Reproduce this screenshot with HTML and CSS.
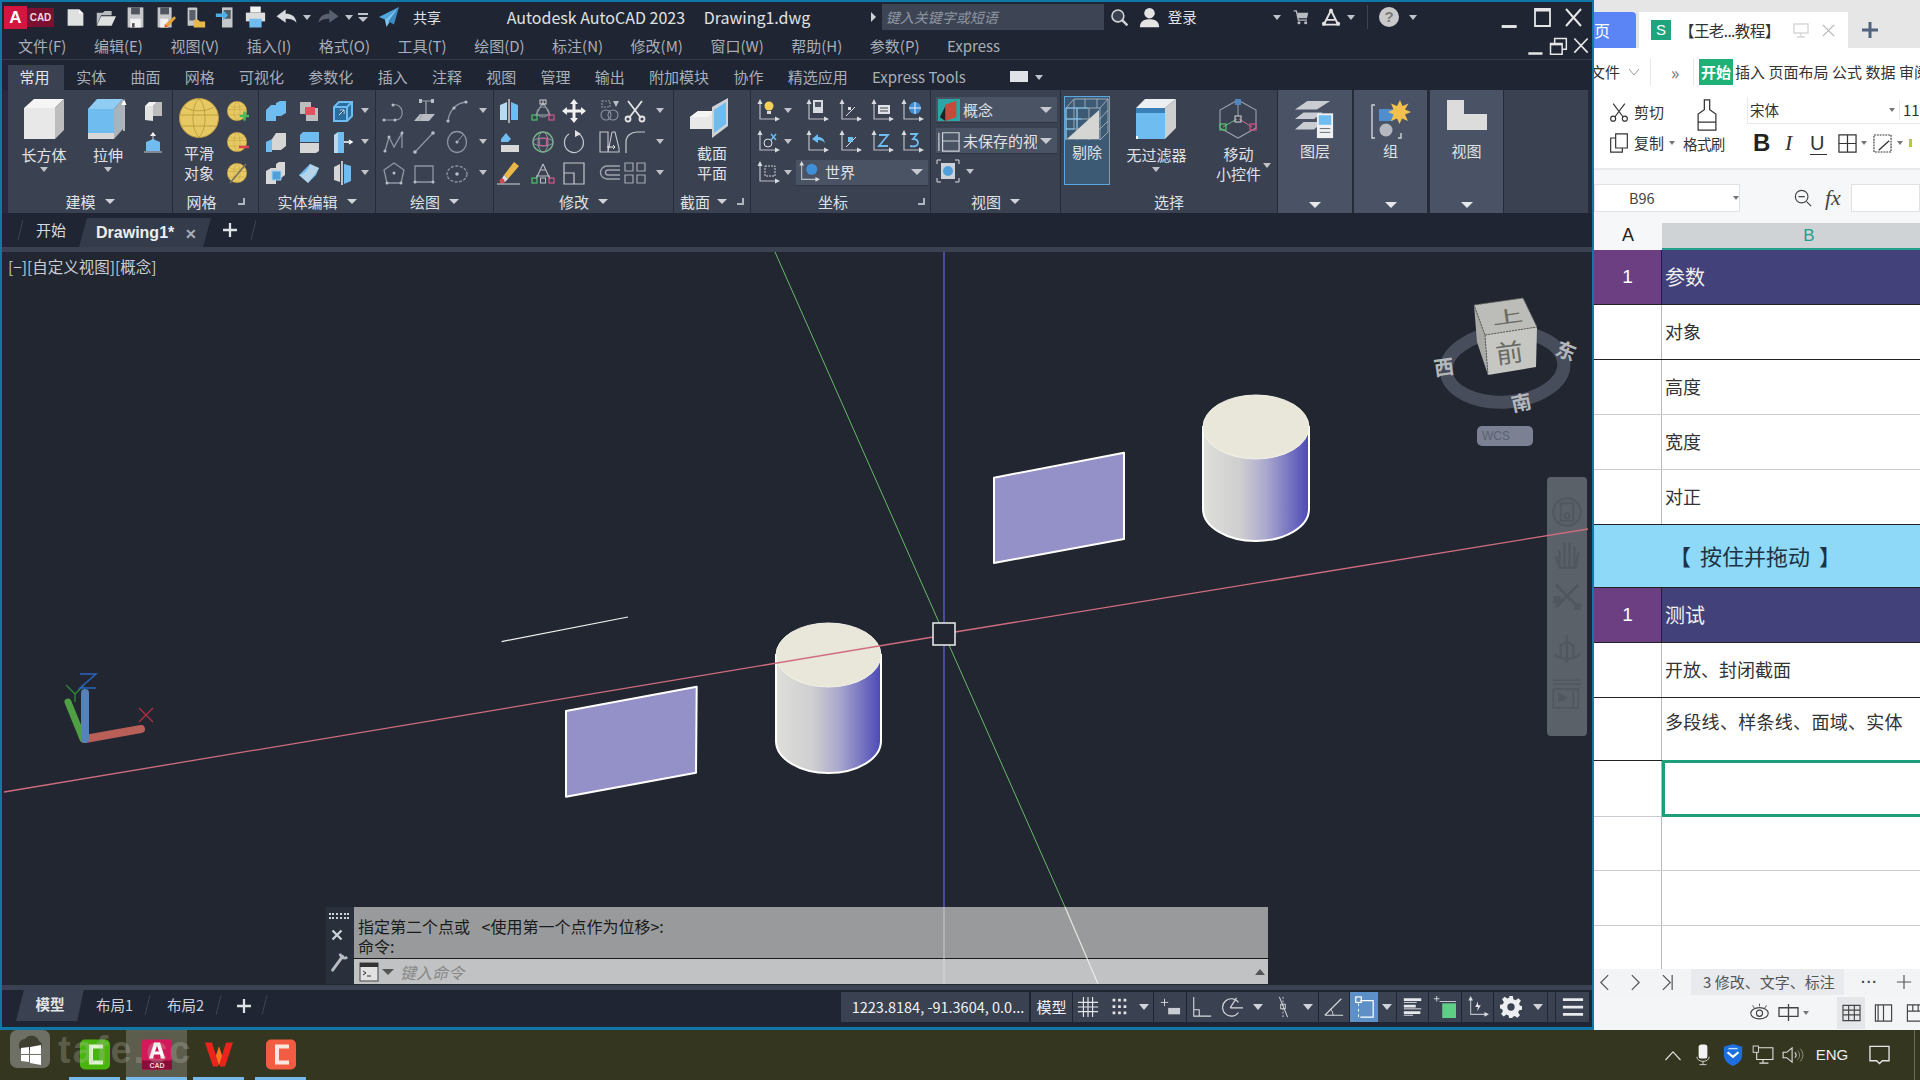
FILE: index.html
```html
<!DOCTYPE html>
<html lang="zh-CN">
<head>
<meta charset="utf-8">
<title>Autodesk AutoCAD 2023</title>
<link rel="stylesheet" href="styles.css">
</head>
<body>
<svg class="sprite" aria-hidden="true">
<defs>
<linearGradient id="cyl" x1="0" x2="1" y1="0" y2="0"><stop offset="0" stop-color="#dededa"/><stop offset=".35" stop-color="#cfcfd0"/><stop offset=".6" stop-color="#a9a7cd"/><stop offset=".85" stop-color="#6f6dbf"/><stop offset="1" stop-color="#4c49b6"/></linearGradient>
<symbol id="cube" viewBox="0 0 40 40"><path fill="#e8e8e8" d="M0 9h31v31H0z"/><path fill="#f5f5f5" d="M0 9 10 0h30l-9 9z"/><path fill="#bdbdbd" d="M31 9l9-9v31l-9 9z"/></symbol>
<symbol id="extrude" viewBox="0 0 40 40"><path fill="#6ebcf0" d="M0 10h26v24H0z"/><path fill="#d8d8d8" d="M0 34h26v6H0z"/><path fill="#90cdf5" d="M0 10 9 0h26l-9 10z"/><path fill="#aab2ba" d="M26 10l9-10v30l-9 10z"/><path stroke="#e8e8e8" stroke-width="1.4" d="M36 32V3"/><path fill="#fff" d="M36 0l-2.5 6h5z"/></symbol>
<symbol id="polys" viewBox="0 0 24 24"><path fill="#e2e2e2" d="M4 7h8v15l-8-1z"/><path fill="#bcbcbc" d="M12 7l4-4h5v14h-9z"/><path fill="#f2f2f2" d="M4 7l4-4h8l-4 4z"/></symbol>
<symbol id="press" viewBox="0 0 24 24"><path fill="#6ebcf0" d="M5 12l7-3 7 3v9H5z"/><path fill="#fff" d="M12 2l-3 4h6z"/><path stroke="#cbd0d6" d="M3 22h18M12 5v5"/></symbol>
<symbol id="sph" viewBox="0 0 40 40"><ellipse cx="20" cy="20" rx="19.5" ry="19.5" fill="#e7c964" stroke="#b9983f"/><path fill="none" stroke="#b79437" stroke-width=".8" d="M1 17h38M3 28h34M20 1c-7 4-9 30 0 38M20 1c7 4 9 30 0 38M5 9c8 5 22 5 30 0"/></symbol>
<symbol id="sphp" viewBox="0 0 24 24"><use href="#sph" x="1" y="0" width="20" height="24"/><path stroke="#3fbf5a" stroke-width="2.6" d="M14 17h9M18.500 12.500v9"/></symbol>
<symbol id="sphm" viewBox="0 0 24 24"><use href="#sph" x="1" y="0" width="20" height="24"/><path stroke="#d8454a" stroke-width="2.6" d="M13 17h10"/></symbol>
<symbol id="sphs" viewBox="0 0 24 24"><use href="#sph" x="1" y="0" width="20" height="24"/><path stroke="#75705f" stroke-width="1.6" d="M4 22 20 3"/></symbol>
<symbol id="e1" viewBox="0 0 24 24"><path fill="#6ebcf0" d="M2 11l5-5h5v-2l4-2h6v12l-5 3h-5v5H2z"/></symbol>
<symbol id="e2" viewBox="0 0 24 24"><path fill="#bdbdbd" d="M3 3h11v6h7v13H9v-7H3z"/><path fill="#e2525f" d="M8 8h10v8H8z"/></symbol>
<symbol id="e3" viewBox="0 0 24 24"><path fill="#2b6d9e" stroke="#6ebcf0" stroke-width="2" d="M3 8l5-5h13v14l-5 5H3zM3 8h13v14M16 8l5-5"/><path stroke="#cfe8fa" d="M8 16l5-5M9 11h4v4"/></symbol>
<symbol id="e4" viewBox="0 0 24 24"><path fill="#6ebcf0" d="M2 12l6-3v13H2z"/><path fill="#d6d6d6" d="M8 9l4-6h10v13l-5 4H8z"/></symbol>
<symbol id="e5" viewBox="0 0 24 24"><path fill="#6ebcf0" d="M3 5l3-3h16v10H3z"/><path fill="#d6d6d6" d="M3 13h19v8l-3 2H3z"/></symbol>
<symbol id="e6" viewBox="0 0 24 24"><path fill="#b8d9f0" d="M3 5l4-3v21H3z"/><path fill="#6ebcf0" d="M7 2h6v21H7z"/><path stroke="#fff" stroke-width="1.5" d="M13 12h8m-3-2 3 2-3 2"/></symbol>
<symbol id="e7" viewBox="0 0 24 24"><path fill="#d8d8d8" d="M2 10l5-3h5V3l3-2h6v13l-4 3h-5v6H2z"/><path fill="#4f9fd8" stroke="#9ed2f5" d="M8 10h9v9H8z"/></symbol>
<symbol id="e8" viewBox="0 0 24 24"><path fill="#6ebcf0" d="M2 14 13 3l9 4-3 7-8 8z"/><path fill="#e4e4e4" d="M2 14c6 0 10-7 11-11l9 4c-3 5-7 10-11 15z" opacity=".6"/></symbol>
<symbol id="e9" viewBox="0 0 24 24"><path fill="#d6d6d6" d="M3 6l6-3v18l-6-2z"/><path fill="#6ebcf0" d="M13 3l7 2v15l-7 3z"/><path stroke="#eee" stroke-width="1.5" d="M11 0v24"/></symbol>
<symbol id="d1" viewBox="0 0 24 24"><g fill="none" stroke="#8f96a2" stroke-width="1.2"><path d="M2 21h11c6 0 8-5 7-9-1-5-5-7-9-6"/></g><g fill="#b9bec6"><circle cx="2" cy="21" r="1.500"/><circle cx="13" cy="21" r="1.500"/><circle cx="11" cy="6" r="1.500"/></g></symbol>
<symbol id="d2" viewBox="0 0 24 24"><path fill="#b9bcc2" d="M2 22l6-7h15l-6 7z"/><path fill="none" stroke="#a0a5ad" stroke-width="1.200" d="M8 2h12M14 2v13M10 15l-3 7"/><path fill="#b9bec6" d="M7 0h3v4H7zM19 0h3v4h-3z"/></symbol>
<symbol id="d3" viewBox="0 0 24 24"><path fill="none" stroke="#8f96a2" stroke-width="1.3" d="M3 22C4 12 11 4 21 3"/><g fill="#b9bec6"><circle cx="3" cy="22" r="1.600"/><circle cx="9" cy="9" r="1.600"/><circle cx="21" cy="3" r="1.600"/></g></symbol>
<symbol id="d4" viewBox="0 0 24 24"><path fill="none" stroke="#8f96a2" stroke-width="1.3" d="M3 21 7 7l5 10 8-14v15"/><g fill="#b9bec6"><circle cx="3" cy="21" r="1.500"/><circle cx="7" cy="7" r="1.500"/><circle cx="20" cy="3" r="1.500"/></g></symbol>
<symbol id="d5" viewBox="0 0 24 24"><path stroke="#8f96a2" stroke-width="1.3" d="M3 22 21 3"/><g fill="#b9bec6"><circle cx="3" cy="22" r="1.800"/><circle cx="21" cy="3" r="1.800"/></g></symbol>
<symbol id="d6" viewBox="0 0 24 24"><ellipse cx="12" cy="12" rx="9.500" ry="10.500" fill="none" stroke="#8f96a2" stroke-width="1.300"/><circle cx="12" cy="12" r="1.500" fill="#b9bec6"/><path stroke="#8f96a2" d="M12 12l6-7"/></symbol>
<symbol id="d7" viewBox="0 0 24 24"><path fill="none" stroke="#8f96a2" stroke-width="1.300" d="M12 2l10 7-3 13H5L2 9z"/><circle cx="12" cy="12" r="1.500" fill="#b9bec6"/><g fill="#b9bec6"><circle cx="5" cy="22" r="1.500"/><circle cx="19" cy="22" r="1.500"/></g></symbol>
<symbol id="d8" viewBox="0 0 24 24"><path fill="none" stroke="#8f96a2" stroke-width="1.300" d="M3 5h18v16H3z"/><g fill="#b9bec6"><circle cx="3" cy="21" r="1.500"/><circle cx="21" cy="21" r="1.500"/></g></symbol>
<symbol id="d9" viewBox="0 0 24 24"><ellipse cx="12" cy="13" rx="10" ry="8" fill="none" stroke="#8f96a2" stroke-width="1.300" stroke-dasharray="3 1.500"/><circle cx="12" cy="13" r="1.800" fill="#b9bec6"/></symbol>
<symbol id="m1" viewBox="0 0 24 24"><path fill="#b8d9f0" d="M3 6l7-3v18H3z"/><path fill="#6ebcf0" d="M14 3l7 3v15h-7z"/><path stroke="#e8e8e8" stroke-width="1.300" d="M12 0v24"/></symbol>
<symbol id="m2" viewBox="0 0 24 24"><path fill="none" stroke="#a4a9b1" stroke-width="1.100" d="M12 3l7 13H5zM12 1v6"/><ellipse cx="12" cy="13" rx="6" ry="5" fill="none" stroke="#8f96a2"/><rect x="9" y="1" width="6" height="4" fill="none" stroke="#d0d0d0"/><rect x="1" y="16" width="5" height="5" fill="none" stroke="#4fc06b" stroke-width="1.200"/><rect x="18" y="16" width="5" height="5" fill="none" stroke="#e0508a" stroke-width="1.200"/></symbol>
<symbol id="m3" viewBox="0 0 24 24"><path fill="#f0f0f0" d="M12 0l4 5h-2.500v5.500H19V8l5 4-5 4v-2.500h-5.500V19H16l-4 5-4-5h2.500v-5.500H5V16l-5-4 5-4v2.500h5.500V5H8z"/></symbol>
<symbol id="m4" viewBox="0 0 24 24"><g fill="none" stroke="#8f96a2" stroke-width="1.100"><circle cx="8" cy="16" r="5"/><circle cx="15" cy="16" r="5"/><path d="M4 2h8v6H4z" stroke-dasharray="2 1"/></g><path fill="#b9bec6" d="M15 2h6l-3 6z"/></symbol>
<symbol id="m5" viewBox="0 0 24 24"><g fill="none" stroke="#e4e4e4" stroke-width="1.800"><path d="M5 2l13 17M19 2 6 19"/><circle cx="5" cy="20" r="2.500"/><circle cx="19" cy="20" r="2.500"/></g></symbol>
<symbol id="m6" viewBox="0 0 24 24"><path fill="#6ebcf0" d="M4 20V9l5-6 5 6-3 3H4z"/><path fill="#d8d8d8" d="M4 15h18v7H4z"/></symbol>
<symbol id="m7" viewBox="0 0 24 24"><circle cx="12" cy="12" r="10" fill="none" stroke="#79b58a" stroke-width="1.400"/><ellipse cx="12" cy="12" rx="5" ry="10" fill="none" stroke="#8fa098"/><ellipse cx="12" cy="12" rx="10" ry="4" fill="none" stroke="#8a96aa"/><rect x="8.500" y="8.500" width="7" height="7" fill="none" stroke="#c0608a" stroke-width="1.200"/></symbol>
<symbol id="m8" viewBox="0 0 24 24"><path fill="none" stroke="#c4c8ce" stroke-width="1.200" d="M16 3.500A9.500 10 0 1 1 7 4"/><path fill="#e0e0e0" d="M13 0l6 4-6 3z"/></symbol>
<symbol id="m9" viewBox="0 0 24 24"><path fill="none" stroke="#c4c8ce" stroke-width="1.100" d="M2 2h8v20H2zM14 2l-4 20M14 2h3l4 16v4H10"/><path stroke="#eee" d="M9 17h8m-2-2 2 2-2 2"/></symbol>
<symbol id="m10" viewBox="0 0 24 24"><path fill="none" stroke="#c4c8ce" stroke-width="1.200" d="M3 23V12C3 6 8 2 14 2h8"/></symbol>
<symbol id="m11" viewBox="0 0 24 24"><path fill="#e8b84a" d="M17 1l5 4-11 13-4-4z"/><path fill="#e0e0e0" d="M7 14l4 4-3 3H3z"/><circle cx="5" cy="20" r="2.500" fill="#d8454a"/><path stroke="#d4d7dc" d="M0 23h23"/></symbol>
<symbol id="m12" viewBox="0 0 24 24"><path fill="none" stroke="#b9bec6" stroke-width="1.100" d="M12 3l-7 15M12 3l7 15M5 15h14M9 9h6"/><rect x="1" y="17" width="5" height="5" fill="none" stroke="#4fc06b" stroke-width="1.200"/><rect x="18" y="17" width="5" height="5" fill="none" stroke="#e0508a" stroke-width="1.200"/><rect x="9.500" y="17" width="5" height="5" fill="none" stroke="#b9bec6"/></symbol>
<symbol id="m13" viewBox="0 0 24 24"><path fill="none" stroke="#c4c8ce" stroke-width="1.200" d="M2 2h20v21H2zM2 12h10v11"/></symbol>
<symbol id="m14" viewBox="0 0 24 24"><path fill="none" stroke="#9ea3ab" stroke-width="1.400" d="M22 5H9a6 6 0 0 0 0 13h13M22 9H10a2.500 2.500 0 0 0 0 5h12"/></symbol>
<symbol id="m15" viewBox="0 0 24 24"><path fill="none" stroke="#a4a9b1" stroke-width="1.200" d="M2 2h8v8H2zM14 2h8v8h-8zM2 14h8v8H2zM14 14h8v8h-8z"/></symbol>
<symbol id="ucs" viewBox="0 0 24 24"><path fill="none" stroke="#b9bec6" stroke-width="1.200" d="M4 3v17h16"/><path fill="#d8dbe0" d="M4 0 1.500 5h5zM24 20l-5-2.500v5z"/></symbol>
<symbol id="sect" viewBox="0 0 44 40"><path fill="#e8e8e8" d="M0 19l8-6h22v18H0z"/><path fill="#f5f5f5" d="M0 19l8-6h16l-6 6z"/><path fill="#cfd3d6" d="M22 9 38 0v28L22 40z"/><path fill="#6ebcf0" d="M24 12l12-8v22l-12 9z"/></symbol>
<symbol id="cull" viewBox="0 0 44 42"><path fill="none" stroke="#a9b2bb" stroke-width=".9" d="M1 10l8-9h34v33l-8 8H1zM1 10h34v32M35 10l8-9M1 21h34M1 31h34M12 10v32M24 10v32M9 1v30M20 1v9M32 1v9M43 12l-8 9M43 23l-8 8"/><path fill="#d5d5d3" d="M2 41 34 12v29z"/><path fill="none" stroke="#76c6f5" stroke-width=".9" d="M1 41V10h22M1 21h16M1 31h8M12 10v20"/></symbol>
<symbol id="nofilt" viewBox="0 0 40 40"><path fill="#6ebcf0" d="M0 14h29v26H0z"/><path fill="#3a7fb5" d="M0 9h29v5H0z"/><path fill="#eceff2" d="M0 9 9 0h31l-11 9z"/><path fill="#cfcfcf" d="M29 9l11-9v29l-11 11z"/><rect x="-1" y="37" width="3" height="3" fill="#fff"/></symbol>
<symbol id="gizmo" viewBox="0 0 40 40"><path fill="none" stroke="#9aa1ab" stroke-width="1.100" d="M20 1 38 11v18L20 39 2 29V11z"/><path stroke="#9aa1ab" d="M20 3v14"/><path fill="none" stroke="#6db07b" d="M5 28l14-8"/><path fill="none" stroke="#cf6b8f" d="M21 20l13 8"/><rect x="17" y="0" width="6" height="6" fill="#4f86bf"/><rect x="17" y="17" width="6" height="6" fill="none" stroke="#d8d8d8"/><rect x="2" y="25" width="6" height="6" fill="none" stroke="#4fc06b" stroke-width="1.300"/><rect x="32" y="25" width="6" height="6" fill="none" stroke="#d84d86" stroke-width="1.300"/></symbol>
<symbol id="layers" viewBox="0 0 42 40"><path fill="#c9cdd2" d="M0 9 13 0h24L23 9zM0 19l9-7h20l-9 7zM0 30l9-8h20l-9 8z"/><rect x="23" y="13" width="17" height="26" fill="#eef0f2"/><rect x="25" y="15" width="13" height="10" fill="#6ebcf0"/><path stroke="#666" d="M26 29h11M26 33h11"/></symbol>
<symbol id="group" viewBox="0 0 40 40"><path fill="none" stroke="#d0d3d8" stroke-width="1.400" d="M4 5H1v33h3M28 5h-1m0 33h3v-5"/><rect x="8" y="9" width="14" height="12" fill="#4f8fd0"/><circle cx="15" cy="30" r="6.500" fill="#b5b9bf"/><path fill="#f2c04e" d="M29 0l2.500 6 6-2.500L34 9.500l6 2.500-6 2.500L37 21l-6-2.500L28.500 24 26 18.500 20 21l2.500-6.500L17 12l5.500-2.500L20 3.500l6 2.500z"/></symbol>
<symbol id="lview" viewBox="0 0 40 30"><path fill="#dcdcdc" d="M0 0h17v14h23v16H0z"/></symbol>
<symbol id="grid" viewBox="0 0 24 24"><path stroke="#e2e4e8" stroke-width="1.300" d="M7 1v22M12 1v22M17 1v22M1 7h22M1 12h22M1 17h22"/></symbol>
<symbol id="dots" viewBox="0 0 24 24"><path fill="#e2e4e8" d="M5 3h3v3H5zM11 3h3v3h-3zM17 3h3v3h-3zM5 10h3v3H5zM11 10h3v3h-3zM17 10h3v3h-3zM5 17h3v3H5zM11 17h3v3h-3zM17 17h3v3h-3z"/></symbol>
<symbol id="inf" viewBox="0 0 24 24"><path stroke="#d7dade" d="M6 3v8M2 7h8"/><rect x="10" y="13" width="13" height="7" fill="#c9ccd2"/></symbol>
<symbol id="ortho" viewBox="0 0 24 24"><path fill="none" stroke="#d7dade" stroke-width="1.200" d="M3 1v21h19M3 15h6v7"/></symbol>
<symbol id="polar" viewBox="0 0 24 24"><path fill="none" stroke="#d7dade" stroke-width="1.200" d="M19 7A9.500 9.500 0 1 0 19 18M10 13h14M10 13l7-11"/></symbol>
<symbol id="osnap" viewBox="0 0 24 24"><path stroke="#d7dade" stroke-width="1.100" d="M8 1l9 22"/><rect x="9.500" y="9" width="5" height="5" fill="none" stroke="#d7dade"/><path stroke="#d7dade" stroke-dasharray="2 2" d="M12 1v22"/></symbol>
<symbol id="angle" viewBox="0 0 24 24"><path fill="none" stroke="#d7dade" stroke-width="1.200" d="M2 21h20M2 21 20 3"/><path fill="none" stroke="#d7dade" d="M11 21a9 9 0 0 0-3-7"/></symbol>
<symbol id="dyn" viewBox="0 0 24 24"><path fill="none" stroke="#fff" stroke-width="1.300" d="M8 5h14v18H8"/><rect x="3" y="1" width="6" height="6" fill="none" stroke="#fff" stroke-width="1.300"/><path stroke="#fff" stroke-dasharray="3 3" d="M6 8v16"/></symbol>
<symbol id="lines" viewBox="0 0 24 24"><path stroke="#e6e8ec" stroke-width="3" d="M2 4h19M2 11h13M2 18h18"/><path stroke="#e6e8ec" stroke-width="1" d="M2 7h14M2 14h19M2 21h10"/></symbol>
<symbol id="green" viewBox="0 0 24 24"><path stroke="#d7dade" d="M3 0v6M0 3h6"/><path fill="none" stroke="#cfd3d9" d="M6 6h18"/><rect x="9" y="8" width="15" height="16" fill="#5fcf86"/></symbol>
<symbol id="gear" viewBox="0 0 24 24"><path fill="#eceef1" d="M10 0h4l.6 3.500 2.400 1 3-2 2.800 2.800-2 3 1 2.400L24 11v4l-3.200.6-1 2.400 2 3-2.800 2.800-3-2-2.400 1L14 24.500h-4l-.6-3.200-2.400-1-3 2L1.200 19.500l2-3-1-2.400L0 13.500v-4l3.200-.6 1-2.400-2-3L5 .7l3 2 2.400-1zM12 8a4 4 0 1 0 0 8 4 4 0 0 0 0-8z"/></symbol>
<symbol id="menu3" viewBox="0 0 24 24"><path stroke="#e8eaee" stroke-width="3" d="M1 4h22M1 12h22M1 20h22"/></symbol>
</defs>
</svg>

<div class="screen">
<main class="desk">
<section class="acad">
  <header class="titlebar">
    <div class="logo"><b class="logo-a">A</b><b class="logo-cad">CAD</b></div>
    <div class="qat">
      <svg class="q" viewBox="0 0 24 24"><path fill="#dfe0e0" d="M3 3h13l5 5v14H3z"/><path fill="#fff" d="M16 3v5h5z"/></svg>
      <svg class="q" viewBox="0 0 24 24"><path fill="#b9bcc0" d="M2 7h7l2-2h8v5H7L2 21z"/><path fill="#dfe0e0" d="M7 11h17l-5 11H2z"/></svg>
      <svg class="q" viewBox="0 0 24 24"><path fill="#c5c7ca" d="M3 1h18v23H3z"/><path fill="#50565f" d="M7 1h10v8H7z"/><path fill="#f2f2f2" d="M6 14h12v10H6z"/><path fill="#555" d="M8 19h3v5H8z"/></svg>
      <svg class="q" viewBox="0 0 24 24"><path fill="#c5c7ca" d="M3 1h16v23H3z"/><path fill="#50565f" d="M6 1h10v8H6z"/><path fill="#f2f2f2" d="M6 14h9v10H6z"/><path fill="#e9a23b" d="M22 11l2 2-9 10-4 1 1-4z"/><path fill="#e45a3a" d="M11 20l4 3-4 1z"/></svg>
      <svg class="q" viewBox="0 0 24 24"><rect x="3" y="1" width="11" height="21" rx="1" fill="#c5c7ca"/><rect x="5" y="4" width="7" height="12" fill="#5a6069"/><path fill="#e8b84a" d="M10 15h5l2 2h6v7H10z"/></svg>
      <svg class="q" viewBox="0 0 24 24"><rect x="8" y="1" width="12" height="23" fill="#c5c7ca"/><rect x="10" y="4" width="8" height="10" fill="#555c66"/><path fill="#4fb0e8" d="M1 8h8V4l6 6-6 6v-4H1z"/></svg>
      <svg class="q" viewBox="0 0 24 24"><path fill="#f3f3f3" d="M6 0h12v7H6z"/><path fill="#dcdcdc" d="M1 7h22v10H1z"/><path fill="#6ebcf0" d="M5 14h14v10H5z"/></svg>
    </div>
    <svg class="q2" viewBox="0 0 24 24"><path fill="#d8dade" d="M0 11 11 3v5c7 0 12 3 13 11-3-4-7-5-13-5v5z"/></svg>
    <i class="caret c-s qa1"></i>
    <svg class="q3" viewBox="0 0 24 24"><path fill="#596070" d="M24 11 13 3v5C6 8 1 11 0 19c3-4 7-5 13-5v5z"/></svg>
    <i class="caret c-s qa2"></i>
    <div class="qdrop"></div>
    <svg class="plane" viewBox="0 0 24 24"><path fill="#4fa8e0" d="M24 0 0 12l7 3z"/><path fill="#7cc6f2" d="M24 0 7 15l2 9z"/><path fill="#3b8ac0" d="M24 0 11 17l7 4z"/></svg>
    <span class="share">共享</span>
    <span class="appname">Autodesk AutoCAD 2023</span>
    <span class="docname">Drawing1.dwg</span>
    <i class="tri-r"></i>
    <div class="search">键入关键字或短语</div>
    <svg class="tb-search" viewBox="0 0 24 24"><circle cx="10" cy="10" r="7.500" fill="#3a4252" stroke="#d2d4d8" stroke-width="2"/><path stroke="#d2d4d8" stroke-width="3" d="M15 15l7 7"/></svg>
    <svg class="person" viewBox="0 0 24 24"><circle cx="12" cy="7" r="6" fill="#e4e4e4"/><path fill="#e4e4e4" d="M1 23c0-6 4-9 11-9s11 3 11 9z"/></svg>
    <span class="login">登录</span>
    <i class="caret c-s cr-login"></i>
    <svg class="cart" viewBox="0 0 24 24"><path fill="none" stroke="#b8bcc2" stroke-width="2" d="M1 2h4l3 14h13"/><path fill="#b8bcc2" d="M6 5h17l-2 8H8z"/><circle cx="9" cy="20" r="2.300" fill="#b8bcc2"/><circle cx="19" cy="20" r="2.300" fill="#b8bcc2"/></svg>
    <svg class="a360" viewBox="0 0 24 24"><path fill="none" stroke="#e2e2e2" stroke-width="2.500" d="M12 3 3 21h18zM7 15h10"/><circle cx="12" cy="3.500" r="2.500" fill="#e2e2e2"/><circle cx="3" cy="20" r="2.500" fill="#e2e2e2"/><circle cx="21" cy="20" r="2.500" fill="#e2e2e2"/></svg>
    <i class="caret c-s cr-a"></i>
    <i class="vsep"></i>
    <span class="help">?</span>
    <i class="caret c-s cr-h"></i>
    <svg class="win win-min" viewBox="0 0 24 24"><path stroke="#e6e6e6" stroke-width="3.500" d="M2 21h18"/></svg>
    <svg class="win" viewBox="0 0 24 24"><path fill="none" stroke="#e6e6e6" stroke-width="1.800" d="M5 3h15v17H5z"/><path stroke="#e6e6e6" stroke-width="3" d="M5 4h15"/></svg>
    <svg class="win" viewBox="0 0 24 24"><path stroke="#e6e6e6" stroke-width="2" d="M5 3l15 17M20 3 5 20"/></svg>
  </header>

  <nav class="menubar">
    <span>文件(F)</span><span>编辑(E)</span><span>视图(V)</span><span>插入(I)</span><span>格式(O)</span><span>工具(T)</span><span>绘图(D)</span><span>标注(N)</span><span>修改(M)</span><span>窗口(W)</span><span>帮助(H)</span><span>参数(P)</span><span>Express</span>
    <div class="doc-ctl">
      <svg class="win2" viewBox="0 0 24 24"><path stroke="#e6e6e6" stroke-width="3" d="M4 21h17"/></svg>
      <svg class="win2" viewBox="0 0 24 24"><path fill="none" stroke="#e6e6e6" stroke-width="1.800" d="M3 9h14v13H3zM8 9V3h14v13h-5"/><path stroke="#e6e6e6" stroke-width="2.500" d="M3 10h14"/></svg>
      <svg class="win2" viewBox="0 0 24 24"><path stroke="#e6e6e6" stroke-width="2" d="M4 3l16 17M20 3 4 20"/></svg>
    </div>
  </nav>

  <nav class="tabs">
    <span class="tab on">常用</span><span class="tab">实体</span><span class="tab">曲面</span><span class="tab">网格</span><span class="tab">可视化</span><span class="tab">参数化</span><span class="tab">插入</span><span class="tab">注释</span><span class="tab">视图</span><span class="tab">管理</span><span class="tab">输出</span><span class="tab">附加模块</span><span class="tab">协作</span><span class="tab">精选应用</span><span class="tab">Express Tools</span>
    <i class="tab-ic"></i><i class="caret c-s"></i>
  </nav>

  <div class="ribbon">
    <section class="panel p1">
      <div class="body">
        <div class="big"><svg class="bi"><use href="#cube"/></svg><span class="lb">长方体</span><i class="caret c-s"></i></div>
        <div class="big"><svg class="bi"><use href="#extrude"/></svg><span class="lb">拉伸</span><i class="caret c-s"></i></div>
        <svg class="ic"><use href="#polys"/></svg>
        <svg class="ic r2c3"><use href="#press"/></svg>
      </div>
      <div class="title"><span>建模</span><i class="caret"></i></div>
    </section>
    <section class="panel p2">
      <div class="body">
        <div class="big two"><svg class="bi"><use href="#sph"/></svg><span class="lb">平滑</span><span class="lb">对象</span></div>
        <svg class="ic"><use href="#sphp"/></svg><svg class="ic"><use href="#sphm"/></svg><svg class="ic"><use href="#sphs"/></svg>
      </div>
      <div class="title"><span>网格</span><i class="corner"></i></div>
    </section>
    <section class="panel p3">
      <div class="body">
        <svg class="ic"><use href="#e1"/></svg><svg class="ic"><use href="#e2"/></svg><svg class="ic"><use href="#e3"/></svg><i class="caret c-s"></i>
        <svg class="ic"><use href="#e4"/></svg><svg class="ic"><use href="#e5"/></svg><svg class="ic"><use href="#e6"/></svg><i class="caret c-s"></i>
        <svg class="ic"><use href="#e7"/></svg><svg class="ic"><use href="#e8"/></svg><svg class="ic"><use href="#e9"/></svg><i class="caret c-s"></i>
      </div>
      <div class="title"><span>实体编辑</span><i class="caret"></i></div>
    </section>
    <section class="panel p4">
      <div class="body">
        <svg class="ic"><use href="#d1"/></svg><svg class="ic"><use href="#d2"/></svg><svg class="ic"><use href="#d3"/></svg><i class="caret c-s"></i>
        <svg class="ic"><use href="#d4"/></svg><svg class="ic"><use href="#d5"/></svg><svg class="ic"><use href="#d6"/></svg><i class="caret c-s"></i>
        <svg class="ic"><use href="#d7"/></svg><svg class="ic"><use href="#d8"/></svg><svg class="ic"><use href="#d9"/></svg><i class="caret c-s"></i>
      </div>
      <div class="title"><span>绘图</span><i class="caret"></i></div>
    </section>
    <section class="panel p5">
      <div class="body">
        <svg class="ic"><use href="#m1"/></svg><svg class="ic"><use href="#m2"/></svg><svg class="ic"><use href="#m3"/></svg><svg class="ic je"><use href="#m4"/></svg><svg class="ic"><use href="#m5"/></svg><i class="caret c-s"></i>
        <svg class="ic"><use href="#m6"/></svg><svg class="ic"><use href="#m7"/></svg><svg class="ic"><use href="#m8"/></svg><svg class="ic je"><use href="#m9"/></svg><svg class="ic"><use href="#m10"/></svg><i class="caret c-s"></i>
        <svg class="ic"><use href="#m11"/></svg><svg class="ic"><use href="#m12"/></svg><svg class="ic"><use href="#m13"/></svg><svg class="ic je"><use href="#m14"/></svg><svg class="ic"><use href="#m15"/></svg><i class="caret c-s"></i>
      </div>
      <div class="title"><span>修改</span><i class="caret"></i></div>
    </section>
    <section class="panel p6">
      <div class="body">
        <div class="big two"><svg class="bi bi-w"><use href="#sect"/></svg><span class="lb">截面</span><span class="lb">平面</span></div>
      </div>
      <div class="title ti-sec"><span>截面</span><i class="caret"></i><i class="corner"></i></div>
    </section>
    <section class="panel p7">
      <div class="body">
        <svg class="ic" viewBox="0 0 24 24"><use href="#ucs"/><circle cx="13" cy="7" r="4.500" fill="#f2d05a"/><path fill="#ddd" d="M11 12h4v3h-4z"/></svg><i class="caret c-s"></i><i></i>
        <svg class="ic" viewBox="0 0 24 24"><use href="#ucs"/><rect x="8" y="1" width="10" height="13" fill="#d8dbe0"/><rect x="10" y="3" width="6" height="5" fill="#4f5766"/></svg>
        <svg class="ic" viewBox="0 0 24 24"><use href="#ucs"/><path stroke="#dfe2e6" d="M8 17 17 8"/><path fill="#dfe2e6" d="M10 8h3v3h-3z"/></svg>
        <svg class="ic" viewBox="0 0 24 24"><use href="#ucs"/><rect x="8" y="6" width="12" height="9" fill="#dfe2e6"/><path stroke="#444" d="M10 9h8M10 12h8"/></svg>
        <svg class="ic" viewBox="0 0 24 24"><use href="#ucs"/><circle cx="15" cy="9" r="6" fill="#3f8fd8"/><path stroke="#e8f2fa" d="M9 9h12M15 3v12"/></svg>
        <svg class="ic" viewBox="0 0 24 24"><use href="#ucs"/><circle cx="12" cy="13" r="4" fill="none" stroke="#dfe2e6"/><path stroke="#6ebcf0" stroke-width="1.500" d="M15 4l5 6M20 4l-5 6"/></svg><i class="caret c-s"></i><i></i>
        <svg class="ic" viewBox="0 0 24 24"><use href="#ucs"/><path fill="#6ebcf0" d="M7 9l6-5v3c4 0 6 2 7 6-2-2-4-3-7-3v3z"/></svg>
        <svg class="ic" viewBox="0 0 24 24"><use href="#ucs"/><path stroke="#dfe2e6" d="M8 17 18 7"/><path fill="#6ebcf0" d="M10 7h5v5h-5z"/></svg>
        <svg class="ic" viewBox="0 0 24 24"><use href="#ucs"/><path fill="none" stroke="#6ebcf0" stroke-width="1.800" d="M9 5h9l-9 11h9"/></svg>
        <svg class="ic" viewBox="0 0 24 24"><use href="#ucs"/><path fill="none" stroke="#6ebcf0" stroke-width="1.800" d="M10 4h7l-4 5c3 0 5 1.500 5 4s-3 4-8 3"/></svg>
        <svg class="ic" viewBox="0 0 24 24"><use href="#ucs"/><rect x="9" y="5" width="10" height="10" fill="none" stroke="#cfd3d9" stroke-dasharray="2 1"/></svg><i class="caret c-s"></i>
        <div class="combo c-world"><svg class="cic" viewBox="0 0 24 24"><use href="#ucs"/><circle cx="15" cy="9" r="6" fill="#3f8fd8"/></svg><span>世界</span><i class="caret"></i></div>
      </div>
      <div class="title ti-coord"><span>坐标</span><i class="corner"></i></div>
    </section>
    <section class="panel p8">
      <div class="body">
        <div class="combo"><svg class="cic" viewBox="0 0 24 24"><rect width="24" height="24" fill="#2aa6a6"/><path fill="#c64a3a" d="M8 6l12-4v18L8 24z"/><path fill="#222" d="M2 20l6-12v16z"/></svg><span>概念</span><i class="caret"></i></div>
        <div class="combo"><svg class="cic" viewBox="0 0 24 24"><path fill="none" stroke="#d0d3d8" stroke-width="1.300" d="M1 3v20M5 3h18v20H5zM5 12h18"/></svg><span>未保存的视图</span><i class="caret"></i></div>
        <div class="vrow"><svg class="ic" viewBox="0 0 24 24"><path fill="none" stroke="#d7dade" d="M1 5V1h4M19 1h4v4M23 19v4h-4M5 23H1v-4"/><rect x="5" y="4" width="14" height="16" fill="#cdd2d8"/><circle cx="12" cy="12" r="5" fill="#4f9fd8"/></svg><i class="caret c-s"></i></div>
      </div>
      <div class="title"><span>视图</span><i class="caret"></i></div>
    </section>
    <section class="panel p9">
      <div class="body">
        <div class="big sel"><svg class="bi bi-c"><use href="#cull"/></svg><span class="lb">剔除</span></div>
        <div class="big"><svg class="bi"><use href="#nofilt"/></svg><span class="lb">无过滤器</span><i class="caret c-s"></i></div>
        <div class="big wide"><svg class="bi"><use href="#gizmo"/></svg><span class="lb">移动</span><span class="lb lb-nm">小控件</span><i class="caret c-s gz"></i></div>
      </div>
      <div class="title"><span>选择</span></div>
    </section>
    <section class="panel pl"><div class="big lg"><svg class="bi"><use href="#layers"/></svg><span class="lb">图层</span><i class="caret cb"></i></div></section>
    <section class="panel pl pg"><div class="big lg"><svg class="bi"><use href="#group"/></svg><span class="lb">组</span><i class="caret cb"></i></div></section>
    <section class="panel pl pv"><div class="big lg"><svg class="bi bi-l"><use href="#lview"/></svg><span class="lb">视图</span><i class="caret cb"></i></div></section>
    <section class="panel prest"></section>
  </div>

  <div class="filetabs">
    <i class="slash"></i><span class="ft">开始</span>
    <div class="ft-on"><b>Drawing1*</b><em>✕</em></div>
    <svg class="plus" viewBox="0 0 16 16"><path stroke="#dfe2e6" stroke-width="2.600" d="M8 0v16M0 8h16"/></svg>
    <i class="slash"></i>
  </div>
  <div class="strip"></div>

  <div class="viewport">
    <p class="vlabel">[−][自定义视图][概念]</p>
    <div class="navbar">
      <svg viewBox="0 0 24 24"><g fill="none" stroke="#51575e" stroke-width="1.500"><circle cx="12" cy="12" r="11"/><path d="M7 5h10v14H7z"/><circle cx="12" cy="15" r="2"/></g></svg>
      <svg viewBox="0 0 24 24"><path fill="none" stroke="#51575e" stroke-width="1.800" d="M6 23V9M10 23V3M14 23V3M18 23V6M3 14l3 9h13l2-12"/></svg>
      <svg viewBox="0 0 24 24"><path stroke="#51575e" stroke-width="2" d="M3 3l18 18M21 3 3 21"/><rect x="1" y="12" width="6" height="6" fill="#51575e"/><rect x="18" y="18" width="5" height="5" fill="#51575e"/></svg>
      <svg class="nb-g" viewBox="0 0 24 24"><path fill="none" stroke="#51575e" stroke-width="1.800" d="M12 1v22M7 20V9l5-3 5 3v11M2 16c3 5 17 5 20 0"/></svg>
      <svg class="nb-s" viewBox="0 0 24 24"><path fill="none" stroke="#51575e" stroke-width="1.300" d="M1 1h22M1 4h22M1 8h20v15H1zM17 8v15"/><path fill="#51575e" d="M5 11l8 4-8 4z"/></svg>
    </div>
    <svg class="cube" viewBox="0 0 160 150">
      <ellipse cx="33" cy="78" rx="59" ry="35" fill="none" stroke="#474d5b" stroke-width="13" transform="rotate(-4 33 78)"/>
      <path fill="#bcbdb8" d="M2 16 51 9l14 29-52 8z"/>
      <path fill="#c6c7c2" d="M13 46l52-8-1 40-48 8z"/>
      <path fill="#a9aaa6" d="M2 16l11 30 3 40-11-33z"/>
      <path fill="none" stroke="#5a5a5a" stroke-dasharray="2 1" d="M2 16 51 9l14 29-52 8zM13 46l3 40"/>
      <text class="cu" transform="translate(21 36) rotate(-8) scale(1.300 .7)">上</text>
      <text class="cu cf" transform="translate(25 75) rotate(-8) scale(1.100 1)">前</text>
      <text class="cd" transform="translate(82 65) rotate(22)">东</text>
      <text class="cd" transform="translate(-37 87) rotate(-8)">西</text>
      <text class="cd" transform="translate(41 123) rotate(-12)">南</text>
    </svg>
    <div class="wcs">WCS</div>
    <svg class="ucsi" viewBox="0 0 100 100">
      <path stroke="#4f9f45" stroke-width="7" stroke-linecap="round" d="M28 47l15 37"/>
      <path stroke="#b85f57" stroke-width="8" stroke-linecap="round" d="M45 84l56-10"/>
      <path stroke="#5583b8" stroke-width="8" stroke-linecap="round" d="M45 84V38"/>
      <path fill="none" stroke="#2e8a36" stroke-width="1.300" d="M26 30l9 9 9-9M35 39v8"/>
      <path fill="none" stroke="#2a64c0" stroke-width="1.500" d="M40 19h16L40 33h16"/>
      <path fill="none" stroke="#b03040" stroke-width="1.300" d="M99 53l14 14M113 53 99 67"/>
    </svg>
    <section class="cmd">
      <div class="cmd-handle">
        <i class="grip"></i>
        <svg viewBox="0 0 16 16"><path stroke="#cfd3d9" stroke-width="3" d="M2 2l12 12M14 2 2 14"/></svg>
        <svg viewBox="0 0 20 24"><path fill="none" stroke="#b8bcc2" stroke-width="3.200" stroke-linecap="round" d="M3 22 14 7"/><path fill="none" stroke="#b8bcc2" stroke-width="3" d="M11 4c1 4 4 6 8 4"/></svg>
      </div>
      <div class="cmd-main">
        <div class="cmd-hist"><p>指定第二个点或 &lt;使用第一个点作为位移&gt;:</p><p>命令:</p></div>
        <div class="cmd-in">
          <svg viewBox="0 0 20 20"><rect x="1" y="1" width="18" height="18" fill="#e2e2e2" stroke="#444"/><path fill="#333" d="M1 1h18v4H1z"/><path fill="none" stroke="#333" d="M4 9l3 2-3 2M8 14h4"/></svg>
          <i class="caret c-d"></i>
          <span>键入命令</span>
          <i class="caret-up"></i>
        </div>
      </div>
    </section>
    <svg class="scene" viewBox="2 252 1590 733">
      <line class="l-blue" x1="944" y1="252" x2="944" y2="907"/>
      <line class="l-blue2" x1="944" y1="907" x2="944" y2="984"/>
      <line class="l-green" x1="775" y1="252" x2="1065" y2="907"/>
      <line class="l-green2" x1="1065" y1="907" x2="1098" y2="984"/>
      <path class="sq" d="M994 477.700 1124 452.700V539L994 563z"/>
      <path class="sq" d="M566 711 696.700 686.700 696 772.700 566 796.700z"/>
      <path class="cyl" d="M1203 427V509A53 32 0 0 0 1309 509V427z"/>
      <ellipse class="cyt" cx="1256" cy="427" rx="53" ry="32"/>
      <path class="cyl" d="M776 655V741A52.500 32 0 0 0 881 741V655z"/>
      <ellipse class="cyt" cx="828.500" cy="655" rx="52.500" ry="32"/>
      <line class="l-red" x1="4" y1="792" x2="933" y2="637"/>
      <line class="l-red" x1="955" y1="632" x2="1588" y2="529"/>
      <line class="l-white" x1="501.600" y1="641.600" x2="628" y2="617"/>
      <rect class="cross" x="933" y="623" width="22" height="22"/>
    </svg>
  </div>
  <div class="strip"></div>

  <footer class="statusbar">
    <div class="ltabs">
      <span class="lt-on">模型</span><span class="lt">布局1</span><i class="slash sm"></i><span class="lt lt2">布局2</span><i class="slash sm"></i>
      <svg class="plus lp" viewBox="0 0 16 16"><path stroke="#dfe2e6" stroke-width="2.600" d="M8 0v16M0 8h16"/></svg><i class="slash sm"></i>
    </div>
    <div class="sgroup coords">1223.8184, -91.3604, 0.0...</div>
    <div class="sgroup mdl">模型</div>
    <div class="sgroup sg-a"><span class="sb w30"><svg><use href="#grid"/></svg></span><span class="sb w31"><svg><use href="#dots"/></svg></span><span class="sb w19"><i class="caret"></i></span></div>
    <div class="sgroup"><span class="sb w32"><svg><use href="#inf"/></svg></span></div>
    <div class="sgroup"><span class="sb w30"><svg><use href="#ortho"/></svg></span><span class="sb w30"><svg><use href="#polar"/></svg></span><span class="sb w22"><i class="caret"></i></span><span class="sb w28"><svg><use href="#osnap"/></svg></span><span class="sb w21"><i class="caret"></i></span></div>
    <div class="sgroup"><span class="sb w30"><svg><use href="#angle"/></svg></span></div>
    <div class="sgroup"><span class="sb w28 act"><svg><use href="#dyn"/></svg></span><span class="sb w18"><i class="caret"></i></span></div>
    <div class="sgroup"><span class="sb w31"><svg><use href="#lines"/></svg></span></div>
    <div class="sgroup"><span class="sb w32"><svg><use href="#green"/></svg></span></div>
    <div class="sgroup"><span class="sb w31"><svg viewBox="0 0 24 24"><use href="#ucs"/><path fill="#e6e8ec" d="M12 6l-3 6h3l-1 5 4-7h-3z"/></svg></span></div>
    <div class="sgroup"><span class="sb w34"><svg><use href="#gear"/></svg></span><span class="sb w19"><i class="caret"></i></span></div>
    <div class="sgroup sg-thin"></div>
    <div class="sgroup"><span class="sb w33"><svg><use href="#menu3"/></svg></span></div>
  </footer>
</section>

<section class="wps">
  <div class="w-tabs">
    <span class="w-home">页</span>
    <div class="w-doc">
      <b class="w-s">S</b><span class="w-dname">【王老...教程】</span>
      <svg class="w-mon" viewBox="0 0 16 16"><path fill="none" stroke="#d8d8d8" stroke-width="1.400" d="M1 2h14v9H1zM8 11v4M4 15h8"/></svg>
      <svg class="w-x" viewBox="0 0 16 16"><path stroke="#b5b5b5" stroke-width="1.500" d="M1 1l14 14M15 1 1 15"/></svg>
    </div>
    <svg class="w-plus" viewBox="0 0 16 16"><path stroke="#52637f" stroke-width="3" d="M8 0v16M0 8h16"/></svg>
  </div>
  <div class="w-menu">
    <span class="wm-file">文件</span>
    <svg class="wm-v" viewBox="0 0 12 8"><path fill="none" stroke="#999" d="M1 1l5 6 5-6"/></svg>
    <i class="wm-sep"></i>
    <span class="wm-more">»</span>
    <i class="wm-sep"></i>
    <b class="wm-on">开始</b>
    <span class="wm-i">插入</span><span class="wm-i">页面布局</span><span class="wm-i">公式</span><span class="wm-i">数据</span><span class="wm-i">审阅</span>
  </div>
  <div class="w-tools">
    <div class="wt-clip">
      <div class="wt-row"><svg class="wic" viewBox="0 0 24 24"><g fill="none" stroke="#333" stroke-width="1.400"><path d="M5 2l12 16M19 2 7 18"/><circle cx="5" cy="20" r="3"/><circle cx="19" cy="20" r="3"/></g></svg><span>剪切</span></div>
      <div class="wt-row"><svg class="wic" viewBox="0 0 24 24"><path fill="none" stroke="#333" stroke-width="1.400" d="M8 1h14v17H8zM8 6H2v17h14v-5"/></svg><span>复制</span><i class="wcaret"></i></div>
    </div>
    <div class="wt-paint">
      <svg viewBox="0 0 24 36"><path fill="none" stroke="#333" stroke-width="1.400" d="M9 1h6v11l7 5v18H2V17l7-5zM2 26h20"/></svg>
      <span>格式刷</span>
    </div>
    <div class="wt-font">
      <div class="wt-fbox"><span class="wf-name">宋体</span><i class="wcaret"></i><span class="wf-size">11</span></div>
      <div class="wt-frow">
        <b class="f-b">B</b><i class="f-i">I</i><span class="f-u">U</span>
        <svg class="wic wf1" viewBox="0 0 20 20"><path fill="none" stroke="#333" stroke-width="1.300" d="M1 1h18v18H1zM10 1v18M1 10h18"/></svg><i class="wcaret"></i>
        <svg class="wic wf2" viewBox="0 0 20 20"><path fill="none" stroke="#333" stroke-width="1.200" stroke-dasharray="2 1" d="M1 1h18v18H1z"/><path stroke="#333" stroke-width="1.400" d="M6 17 17 7"/></svg><i class="wcaret"></i>
        <i class="wf-y"></i>
      </div>
    </div>
  </div>
  <div class="w-formula">
    <div class="w-name"><span>B96</span><i class="wcaret"></i></div>
    <svg class="wz" viewBox="0 0 20 20"><circle cx="8.500" cy="8.500" r="7" fill="none" stroke="#444" stroke-width="1.300"/><path stroke="#444" stroke-width="1.300" d="M14 14l5 5M5 8.500h7"/></svg>
    <span class="w-fx">fx</span>
    <div class="w-input"></div>
  </div>
  <div class="w-heads"><span class="h-a">A</span><span class="h-b">B</span></div>
  <div class="sheet">
    <div class="r r-h r55"><span class="rh">1</span><span class="rc">参数</span></div>
    <div class="r r55 bk"><span class="rh"></span><span class="rc">对象</span></div>
    <div class="r r55"><span class="rh"></span><span class="rc">高度</span></div>
    <div class="r r55"><span class="rh"></span><span class="rc">宽度</span></div>
    <div class="r r55 bk"><span class="rh"></span><span class="rc">对正</span></div>
    <div class="r-band">【 按住并拖动 】</div>
    <div class="r r-h r55 r-h2"><span class="rh">1</span><span class="rc">测试</span></div>
    <div class="r r55 bk"><span class="rh"></span><span class="rc">开放、封闭截面</span></div>
    <div class="r r63 bk"><span class="rh"></span><span class="rc rc-up">多段线、样条线、面域、实体</span></div>
    <div class="r r56"><span class="rh"></span><span class="rc rc-sel"></span></div>
    <div class="r r54"><span class="rh"></span><span class="rc"></span></div>
    <div class="r r55"><span class="rh"></span><span class="rc"></span></div>
    <div class="r r43 nb"><span class="rh"></span><span class="rc"></span></div>
  </div>
  <div class="w-sheets">
    <svg class="wn" viewBox="0 0 12 18"><path fill="none" stroke="#555" stroke-width="1.300" d="M10 1 2 9l8 8"/></svg>
    <svg class="wn" viewBox="0 0 12 18"><path fill="none" stroke="#555" stroke-width="1.300" d="M2 1l8 8-8 8"/></svg>
    <svg class="wn" viewBox="0 0 14 18"><path fill="none" stroke="#555" stroke-width="1.300" d="M2 1l8 8-8 8M12 1v16"/></svg>
    <span class="w-stab">3 修改、文字、标注</span>
    <span class="w-dots">···</span>
    <svg class="w-add" viewBox="0 0 18 18"><path stroke="#555" stroke-width="1.300" d="M9 1v16M1 9h16"/></svg>
  </div>
  <div class="w-status">
    <svg class="ws-eye" viewBox="0 0 24 20"><ellipse cx="12" cy="12" rx="10" ry="6.500" fill="none" stroke="#444" stroke-width="1.300"/><circle cx="12" cy="12" r="3.500" fill="none" stroke="#444" stroke-width="1.300"/><path stroke="#444" d="M12 1v3M4 3l2 3M20 3l-2 3"/></svg>
    <svg class="ws-z" viewBox="0 0 22 20"><path fill="none" stroke="#444" stroke-width="1.400" d="M1 5h20v9H1zM11 1v18"/></svg>
    <i class="wcaret"></i>
    <span class="ws-v ws-on"><svg viewBox="0 0 20 18"><path fill="none" stroke="#444" stroke-width="1.200" d="M1 1h18v16H1zM1 6h18M1 11h18M7 1v16M13 1v16"/></svg></span>
    <span class="ws-v"><svg viewBox="0 0 20 20"><path fill="none" stroke="#444" stroke-width="1.300" d="M1 1h18v18H1zM10 1v18M4 1v18"/></svg></span>
    <span class="ws-v"><svg viewBox="0 0 20 20"><path fill="none" stroke="#444" stroke-width="1.300" d="M1 1h18v18H1zM7 1v7M13 1v7M1 8h18"/></svg></span>
  </div>
</section>
</main>

<footer class="taskbar">
  <div class="tb-start">
    <svg class="tb-cloud" viewBox="0 0 40 38"><rect width="40" height="38" rx="7" fill="#6e6f65"/><path fill="#3f4032" d="M9 16a6 6 0 0 1 6-7 8 8 0 0 1 14 2 5 5 0 0 1 0 9H12a4 4 0 0 1-3-4z"/></svg>
    <svg class="tb-win" viewBox="0 0 20 20"><path fill="#fff" d="M0 3l8-1v7H0zM9 2l11-2v9H9zM0 10h8v7l-8-1zM9 10h11v10L9 18z"/></svg>
  </div>
  <span class="tb-wm">tafe.cc</span>
  <span class="tb-app a1"><svg viewBox="0 0 30 30"><rect width="30" height="30" rx="5" fill="#48b50f"/><path fill="#dff5cf" d="M9 5h14v4H13v12h10v4H9z"/></svg></span>
  <span class="tb-app a2"><svg viewBox="0 0 30 30"><rect width="30" height="30" rx="2" fill="#d4195a"/><rect y="21" width="30" height="9" fill="#8a0c38"/><path fill="#fff" d="M12 3h6l5 16h-4l-1-4h-6l-1 4H7zM13 12h4l-2-6z"/><text class="cadt" x="15" y="28.500">CAD</text></svg></span>
  <span class="tb-app a3"><svg viewBox="0 0 30 30"><path fill="#e8241c" d="M1 3h7l4 13 3-9 3 9 4-13h7l-8 24h-5l-1-5-1 5h-5z"/><path fill="#f7761f" d="M15 7l-3 9 3 10 3-10z"/></svg></span>
  <span class="tb-app a4"><svg viewBox="0 0 30 30"><rect width="30" height="30" rx="5" fill="#f15c42"/><path fill="#ffe6dc" d="M9 5h14v4H13v12h10v4H9z"/></svg></span>
  <div class="tray">
    <span class="t30"><svg viewBox="0 0 24 14"><path fill="none" stroke="#e2e2e2" stroke-width="1.500" d="M2 13 12 2l10 11"/></svg></span>
    <span class="t29"><svg viewBox="0 0 16 24"><rect x="3" y="0" width="10" height="16" rx="3" fill="#f2f2f2"/><path fill="none" stroke="#e2e2e2" d="M1 14c0 7 14 7 14 0M8 19v4M4 23h8"/></svg></span>
    <span class="t31"><svg viewBox="0 0 20 24"><path fill="#1d6fe0" d="M10 0l10 3v9c0 6-5 10-10 12C5 22 0 18 0 12V3z"/><path fill="none" stroke="#fff" stroke-width="2.400" d="M4 9l6 5 6-5"/><path fill="none" stroke="#bfe0ff" stroke-width="1.500" d="M5 5h10"/></svg></span>
    <span class="t30"><svg viewBox="0 0 24 20"><path fill="none" stroke="#e2e2e2" stroke-width="1.200" d="M5 2h18v13H5zM12 15v4M8 19h10"/><rect x="1" y="0" width="6" height="7" fill="#333520" stroke="#e2e2e2"/></svg></span>
    <span class="t30"><svg viewBox="0 0 24 20"><path fill="none" stroke="#e2e2e2" stroke-width="1.200" d="M1 7h4l6-5v16l-6-5H1zM14 7c2 2 2 4 0 6"/><path fill="none" stroke="#9a9a8a" d="M17 5c3 3 3 7 0 10M20 3c4 4 4 10 0 14"/></svg></span>
    <span class="t-eng">ENG</span>
    <span class="t46"><svg viewBox="0 0 22 20"><path fill="none" stroke="#e6e6e6" stroke-width="1.400" d="M1 1h20v15h-7l-3 3-3-3H1z"/></svg></span>
    <i class="t-sep"></i>
  </div>
</footer>
</div>
</body>
</html>
```
FILE: styles.css
```css
* { box-sizing: border-box; }
html, body { margin: 0; padding: 0; }
body { width: 1920px; height: 1080px; overflow: hidden; background: #34361f; font-family: "Noto Sans CJK SC", "Noto Sans", "Liberation Sans", sans-serif; color: #d8dade; }
i, em { font-style: normal; }
p { margin: 0; }
svg { display: block; flex: none; overflow: visible; }
.sprite { width: 0; height: 0; position: absolute; }
.screen { display: grid; grid-template-rows: 1030px 50px; width: 1920px; height: 1080px; }
.desk { display: flex; }

/* carets */
.caret { display: block; flex: none; width: 0; height: 0; border-left: 6px solid transparent; border-right: 6px solid transparent; border-top: 6px solid #d0d4da; }
.c-s { border-left-width: 4px; border-right-width: 4px; border-top-width: 5px; border-top-color: #c0c4ca; }

/* AutoCAD frame */
.acad { width: 1594px; height: 1030px; display: flex; flex-direction: column; background: #1f2532; border-left: 2px solid #0f78a8; border-right: 2px solid #0f78a8; border-top: 2px solid #0f78a8; border-bottom: 3px solid #0f78a8; }

/* title bar */
.titlebar { height: 28px; flex: none; display: flex; align-items: center; padding-top: 2px; font-size: 16px; color: #e0e2e6; }
.logo { display: flex; margin-left: 2px; width: 50px; height: 23px; }
.logo-a { width: 23px; background: #d3163f; color: #fff; font: 700 17px/23px "Liberation Sans", sans-serif; text-align: center; }
.logo-cad { width: 27px; height: 19px; margin-top: 2px; background: #7d1030; color: #f0d8e0; font: 700 10px/19px "Liberation Sans", sans-serif; text-align: center; }
.qat { display: flex; margin-left: 6px; }
.q { width: 21px; height: 22px; margin: 0 4.500px; }
.q2 { width: 21px; height: 20px; margin-left: 6px; }
.qa1 { margin-left: 6px; }
.q3 { width: 21px; height: 20px; margin-left: 7px; }
.qa2 { margin-left: 6px; }
.qdrop { width: 10px; height: 8px; margin-left: 5px; border-top: 2px solid #c0c4ca; }
.qdrop::after { content: ""; display: block; margin: 2px 0 0 0; width: 0; height: 0; border-left: 5px solid transparent; border-right: 5px solid transparent; border-top: 5px solid #c0c4ca; }
.plane { width: 20px; height: 20px; margin-left: 11px; }
.share { margin-left: 14px; font-size: 14px; line-height: 20px; width: 56px; }
.appname { font-size: 16px; line-height: 22px; width: 198px; margin-left: 38px; white-space: nowrap; }
.docname { font-size: 16px; line-height: 22px; width: 169px; white-space: nowrap; }
.tri-r { width: 0; height: 0; border-left: 5px solid #cfd2d6; border-top: 5px solid transparent; border-bottom: 5px solid transparent; margin-right: 6px; margin-left: -1px; }
.search { width: 223px; height: 26px; margin-top: -1px; background: #3d4453; color: #8e96a3; font-size: 14px; line-height: 26px; padding-left: 4px; font-style: italic; }
.tb-search { width: 19px; height: 19px; margin-left: 6px; }
.person { width: 21px; height: 21px; margin-left: 10px; }
.login { margin-left: 8px; font-size: 14.500px; line-height: 20px; width: 106px; }
.cr-login { margin-right: 12px; }
.cart { width: 16px; height: 17px; }
.a360 { width: 20px; height: 19px; margin-left: 12px; }
.cr-a { margin-left: 6px; }
.vsep { width: 1px; height: 24px; background: #3b4250; margin-left: 12px; }
.help { width: 20px; height: 20px; margin-left: 11px; border-radius: 50%; background: #c9c9c9; color: #7a7a7a; font: 700 15px/20px "Liberation Sans", sans-serif; text-align: center; }
.cr-h { margin-left: 10px; margin-right: 82px; }
.win { width: 24px; height: 24px; margin-right: 7px; margin-top: 1px; }
.win-min { margin-top: 3px; width: 22px; height: 20px; margin-right: 9px; }

/* menu */
.menubar { height: 30px; flex: none; display: flex; align-items: center; gap: 27.500px; padding: 3px 0 0 16px; font-size: 15px; line-height: 20px; color: #a9afb9; border-bottom: 1px solid #343b48; white-space: nowrap; }
.doc-ctl { display: flex; margin-left: auto; align-items: center; gap: 3px; margin-right: 1px; }
.win2 { width: 20px; height: 20px; margin-top: 0; }

/* ribbon tabs */
.tabs { height: 30px; flex: none; display: flex; align-items: flex-end; padding-left: 6px; font-size: 15px; line-height: 23px; color: #a9afb9; white-space: nowrap; }
.tab { padding: 0 12.150px; height: 25px; }
.tab.on { background: #3a4252; color: #e4e6ea; width: 56px; padding: 0 11.500px; }
.tab-ic { width: 18px; height: 11px; background: #dfe2e6; margin: 0 7px 8px 32px; }
.tabs .caret { margin-bottom: 10px; }

/* ribbon */
.ribbon { height: 123px; flex: none; display: flex; gap: 1px; padding-left: 6px; background: #252b38; }
.panel { background: #3a4151; display: grid; grid-template-rows: 100px 23px; flex: none; }
.body { display: grid; padding-top: 5px; grid-template-rows: 31px 31px 31px; align-items: center; justify-items: center; }
.title { display: flex; align-items: center; justify-content: center; gap: 9px; font-size: 15px; line-height: 22px; color: #dfe2e6; white-space: nowrap; }
.title .caret { border-left-width: 5px; border-right-width: 5px; border-top-width: 5px; }
.corner { width: 7px; height: 7px; flex: none; border-right: 2px solid #aeb4bc; border-bottom: 2px solid #aeb4bc; margin-left: 12px; }
.ic { width: 24px; height: 24px; }
.je { justify-self: end; }
.big { display: flex; flex-direction: column; align-items: center; grid-row: 1 / 4; align-self: start; padding-top: 4px; }
.bi { width: 40px; height: 40px; margin-bottom: 7px; }
.lb { font-size: 15px; line-height: 18px; color: #e0e2e6; white-space: nowrap; }
.big .caret { margin-top: 3px; }
.two { padding-top: 3px; }
.two .bi { margin-bottom: 5px; }
.two .lb { line-height: 20px; }

.p1 { width: 164px; }
.p1 .body { grid-template-columns: 72px 56px 34px; }
.p1 .big:nth-child(2) { grid-column: 2; }
.r2c3 { grid-column: 3; grid-row: 2; }
.p1 .ic { grid-column: 3; }
.p2 { width: 85px; }
.p2 .body { grid-template-columns: 52px 25px; }
.p2 .ic { grid-column: 2; }
.p3 { width: 116px; }
.p3 .body { grid-template-columns: 33px 34px 33px 12px; }
.p4 { width: 117px; }
.p4 .body { grid-template-columns: 36px 24px 42px 10px; }
.p5 { width: 179px; }
.p5 .body { grid-template-columns: 30px 38px 24px 36px 26px 24px; }
.p6 { width: 76px; }
.p6 .body { grid-template-columns: 76px; }
.bi-w { width: 44px; }
.ti-sec { justify-content: flex-start; padding-left: 6px; gap: 7px; }
.ti-sec .corner { margin-left: 3px; }
.p7 { width: 179px; }
.p7 .body { grid-template-columns: 26px 14px 6px 32px 34px 30px 30px; padding-left: 4px; }
.c-world { grid-column: 3 / 8; margin-left: 2px; width: 125px; }
.c-world .cic { margin-right: 2px; }
.ti-coord { justify-content: flex-start; }
.ti-coord span { margin-left: 67px; }
.ti-coord .corner { margin-left: 61px; }
.p8 { width: 129px; }
.p8 .body { display: flex; flex-direction: column; align-items: flex-start; padding: 7px 0 0 5px; gap: 5px; }
.p8 .combo { width: 121px; }
.combo { height: 26px; display: flex; align-items: center; background: #4a5364; font-size: 15px; line-height: 20px; color: #e0e2e6; width: 100%; padding: 0 5px 0 2px; gap: 3px; border-bottom: 1px solid #2e3441; white-space: nowrap; overflow: hidden; }
.combo span { flex: 1; overflow: hidden; }
.combo .caret { border-top-color: #c6cad0; }
.cic { width: 22px; height: 22px; }
.vrow { display: flex; align-items: center; gap: 6px; }
.p9 { width: 216px; }
.p9 .body { grid-template-columns: 52px 87px 77px; }
.sel { width: 46px; height: 89px; padding-top: 1px; margin-top: 1px; background: #3d5a75; border: 1px solid #5aa6e0; }
.bi-c { width: 44px; height: 42px; margin-bottom: 3px; }
.wide { position: relative; }
.wide .lb { line-height: 20px; margin-top: -2px; }
.wide .lb-nm { margin-top: 0; }
.gz { position: absolute; right: -10px; top: 65px; }
.pl { width: 74px; display: block; background: #495365; }
.pg { width: 73px; margin-left: 1px; }
.pv { width: 73px; margin-left: 2px; }
.prest { width: 84px; background: #3a4151; }
.lg { padding-top: 10px; height: 123px; }
.lg .bi { margin-bottom: 1px; }
.lg .lb { line-height: 20px; color: #e0e2e6; }
.lg .cb { margin-top: 41px; border-top-color: #e6e8ea; }
.lg .bi-l { height: 30px; margin-bottom: 11px; }

/* file tabs */
.filetabs { height: 34px; flex: none; display: flex; align-items: center; font-size: 15px; line-height: 20px; color: #d6d9de; }
.slash { width: 1px; height: 20px; background: #3e4554; transform: rotate(14deg); margin-left: 18px; }
.ft { margin-left: 15px; }
.ft-on { margin-left: 13px; height: 29px; margin-top: 5px; width: 132px; display: flex; align-items: center; background: #343c4b; clip-path: polygon(8px 0, 100% 0, 124px 100%, 0 100%); padding-left: 17px; color: #eceef0; }
.ft-on b { font-family: "Liberation Sans", sans-serif; font-size: 16px; width: 82px; }
.ft-on em { font-size: 14px; color: #a9afb9; margin-left: 7px; font-weight: 700; line-height: 16px; }
.plus { width: 14px; height: 14px; margin-left: 12px; }
.filetabs .slash { margin-left: 16px; }
.filetabs .slash:first-child { margin-left: 18px; }
.strip { height: 5px; flex: none; background: #3a4150; }

/* viewport */
.viewport { height: 733px; flex: none; position: relative; background: #212631; overflow: hidden; }
.scene { position: absolute; left: 0; top: 0; width: 1590px; height: 733px; z-index: 3; pointer-events: none; }
.vlabel { position: absolute; left: 6px; top: 4px; font-size: 15.500px; line-height: 20px; color: #c9cdd3; white-space: nowrap; }
.l-blue { stroke: #5c60d2; stroke-width: 1.300; }
.l-blue2 { stroke: #dfe0f0; stroke-width: 1; opacity: .7; }
.l-green { stroke: #67b968; stroke-width: 1; }
.l-green2 { stroke: #f0f4ee; stroke-width: 1.200; opacity: .85; }
.l-red { stroke: #cf6d7e; stroke-width: 1.300; }
.l-white { stroke: #f2f2f2; stroke-width: 1.200; }
.sq { fill: #9490c8; stroke: #fff; stroke-width: 2; stroke-linejoin: round; }
.cyl { fill: url(#cyl); stroke: #fff; stroke-width: 2; }
.cyt { fill: #e8e7d9; stroke: #f4f3ea; stroke-width: 1; }
.cross { fill: #212631; stroke: #f0f0f0; stroke-width: 1.500; }
.navbar { position: absolute; left: 1545px; top: 225px; width: 40px; height: 259px; background: #5b6168; border-radius: 4px; display: flex; flex-direction: column; align-items: center; padding-top: 20px; gap: 12px; z-index: 1; }
.navbar svg { width: 30px; height: 30px; }
.nb-g { margin-top: 11px; }
.nb-s { margin-top: 3px; }
.cube { position: absolute; left: 1470px; top: 37px; width: 160px; height: 150px; }
.cu { font-size: 24px; fill: #6a6b66; font-weight: 400; }
.cf { font-size: 25px; font-weight: 400; }
.cd { font-size: 20px; fill: #b4b7bc; font-weight: 700; }
.wcs { position: absolute; left: 1475px; top: 174px; width: 56px; height: 20px; background: #7b8192; border-radius: 5px; color: #5c6273; font: 12px/20px "Liberation Sans", sans-serif; padding-left: 5px; }
.ucsi { position: absolute; left: 38px; top: 403px; width: 100px; height: 100px; }
.cmd { position: absolute; left: 324px; top: 655px; width: 942px; height: 77px; display: flex; z-index: 2; }
.cmd-handle { width: 28px; background: #2a2f3c; display: flex; flex-direction: column; align-items: center; padding: 6px 3px 0 0; }
.cmd-handle svg:nth-child(2) { width: 12px; height: 12px; margin: 10px 4px 0 0; }
.cmd-handle svg:nth-child(3) { width: 20px; height: 22px; margin-top: 9px; }
.grip { width: 20px; height: 6px; border-top: 2px dotted #cfd3d9; border-bottom: 2px dotted #cfd3d9; }
.cmd-main { flex: 1; display: flex; flex-direction: column; }
.cmd-hist { height: 52px; background: rgba(166,167,167,.9); border-bottom: 1.500px solid #1a1a1a; padding: 9px 0 0 4px; font-size: 16px; line-height: 20px; word-spacing: 8px; color: #1a1a1a; white-space: nowrap; }
.cmd-in { height: 25px; background: rgba(206,207,207,.92); display: flex; align-items: center; padding-left: 5px; }
.cmd-in svg { width: 20px; height: 20px; }
.c-d { border-top-color: #555; margin-left: 3px; }
.cmd-in span { margin-left: 6px; font-size: 16px; line-height: 20px; color: #888; font-style: italic; }
.caret-up { margin-left: auto; margin-right: 3px; width: 0; height: 0; border-left: 5px solid transparent; border-right: 5px solid transparent; border-bottom: 6px solid #555; }

/* status bar */
.statusbar { height: 35px; flex: none; display: flex; align-items: flex-start; padding-top: 2px; color: #e2e4e8; }
.ltabs { display: flex; align-items: center; width: 839px; height: 30px; margin-top: -2px; font-size: 14.500px; line-height: 20px; }
.lt-on { width: 68px; margin-left: 14px; height: 32px; background: #3a4252; clip-path: polygon(12% 0, 100% 0, 90% 100%, 0 100%); text-align: center; line-height: 30px; font-weight: 700; }
.lt { margin-left: 12px; color: #cfd3d9; width: 38px; white-space: nowrap; }
.lt2 { margin-left: 19px; }
.slash.sm { margin-left: 13px; }
.lp { margin-left: 18px; margin-top: 1px; }
.sgroup { display: flex; align-items: center; height: 30px; background: #3a4150; margin-right: 1px; flex: none; }
.coords { width: 188px; margin-right: 2px; justify-content: center; padding-left: 6px; font-size: 14.500px; line-height: 20px; color: #f0f2f4; white-space: nowrap; }
.mdl { width: 41px; justify-content: center; font-size: 15px; line-height: 20px; color: #f0f2f4; }
.sb { display: flex; justify-content: center; align-items: center; height: 30px; }
.sb svg { width: 22px; height: 22px; }
.sb .caret { border-left-width: 5px; border-right-width: 5px; border-top-width: 6px; }
.w18 { width: 18px; } .w19 { width: 19px; } .w21 { width: 21px; } .w22 { width: 22px; } .w28 { width: 28px; } .w30 { width: 30px; } .w31 { width: 31px; } .w32 { width: 32px; } .w33 { width: 33px; } .w34 { width: 34px; }
.act { background: #5e90c8; }
.sg-thin { width: 7px; margin-right: 1px; }

/* WPS */
.wps { width: 326px; height: 1030px; flex: none; display: flex; flex-direction: column; background: #fff; color: #333; overflow: hidden; }
.w-tabs { height: 48px; flex: none; background: #e6e6e6; display: flex; align-items: flex-end; }
.w-home { width: 42px; height: 36px; background: #5b85f5; color: #fff; font-size: 16px; line-height: 36px; border-radius: 0 4px 0 0; }
.w-doc { width: 209px; height: 36px; margin-left: 3px; background: #fff; display: flex; align-items: center; padding-left: 12px; }
.w-s { width: 20px; height: 20px; background: #1ea57d; color: #fff; font: 400 15px/20px "Liberation Sans", sans-serif; text-align: center; }
.w-dname { margin-left: 8px; font-size: 15.500px; line-height: 20px; width: 106px; white-space: nowrap; letter-spacing: -.6px; color: #333; }
.w-mon { width: 16px; height: 16px; margin-left: 8px; }
.w-x { width: 13px; height: 13px; margin-left: 13px; }
.w-plus { width: 16px; height: 16px; margin: 0 0 10px 14px; }
.w-menu { height: 42px; flex: none; background: #fff; display: flex; align-items: center; padding-top: 5px; font-size: 15px; line-height: 20px; white-space: nowrap; color: #333; }
.w-menu > * { flex: none; }
.wm-file { width: 30px; margin-left: -4px; }
.wm-v { width: 12px; height: 8px; margin-left: 8px; }
.wm-sep { width: 1px; height: 26px; background: #e6e6e6; margin-left: 10px; }
.wm-more { width: 30px; text-align: center; color: #777; font-size: 18px; margin-left: 9px; margin-right: 3px; }
.wm-sep + .wm-more + .wm-sep { margin-left: 0; }
.wm-on { width: 34px; height: 26px; margin-left: 5px; background: #1fb077; color: #fff; text-align: center; line-height: 26px; font-size: 15px; margin-right: 2px; }
.wm-i { margin-right: 3.500px; }
.w-tools { height: 80px; flex: none; display: flex; border-bottom: 2px solid #eaeaea; }
.wt-clip { width: 82px; flex: none; padding: 6px 0 0 15px; }
.wt-row { display: flex; align-items: center; height: 31px; gap: 5px; font-size: 15px; line-height: 20px; white-space: nowrap; }
.wt-row .wic { width: 20px; height: 22px; }
.wcaret { display: block; flex: none; width: 0; height: 0; border-left: 3px solid transparent; border-right: 3px solid transparent; border-top: 4px solid #777; }
.wt-paint { width: 62px; flex: none; display: flex; flex-direction: column; align-items: center; padding-top: 9px; font-size: 14.500px; line-height: 18px; white-space: nowrap; }
.wt-paint svg { width: 22px; height: 32px; margin-bottom: 4px; }
.wt-paint span { width: 48px; letter-spacing: -.6px; }
.wt-font { margin-left: 9px; flex: 1; }
.wt-fbox { margin-top: 7px; height: 27px; display: flex; align-items: center; border-left: 1px solid #e8e8e8; border-bottom: 1px solid #e8e8e8; padding-left: 2px; font-size: 14.500px; line-height: 20px; }
.wf-name { width: 139px; }
.wf-size { margin-left: 4px; border-left: 1px solid #e8e8e8; padding-left: 3px; font-size: 15px; }
.wt-frow { display: flex; align-items: center; height: 32px; margin-top: 3px; }
.f-b { font: 700 24px/24px "Liberation Sans", sans-serif; margin-left: 6px; width: 20px; color: #222; }
.f-i { font: italic 400 22px/24px "Liberation Serif", serif; margin-left: 12px; width: 10px; color: #333; }
.f-u { font: 400 20px/24px "Liberation Sans", sans-serif; margin-left: 15px; border-bottom: 1.500px solid #333; height: 24px; width: 17px; color: #333; }
.wf1 { width: 19px; height: 19px; margin-left: 11px; }
.wf1 + .wcaret { margin-left: 4px; }
.wf2 { width: 19px; height: 19px; margin-left: 6px; }
.wf2 + .wcaret { margin-left: 5px; }
.wf-y { width: 3px; height: 8px; margin-left: 6px; background: #b8c93a; }
.w-formula { height: 53px; flex: none; background: #f6f7f8; display: flex; align-items: flex-start; padding-top: 14px; }
.w-name { width: 147px; height: 28px; background: #fff; border: 1px solid #e2e2e2; display: flex; align-items: center; font-size: 14.500px; line-height: 20px; }
.w-name span { margin-left: 34px; width: 104px; color: #444; }
.wz { width: 18px; height: 18px; margin: 5px 0 0 54px; }
.w-fx { margin-left: 13px; font: italic 400 22px/28px "Liberation Serif", serif; color: #444; width: 24px; }
.w-input { width: 70px; height: 28px; background: #fff; border: 1px solid #e2e2e2; margin-left: 2px; }
.w-heads { height: 27px; flex: none; display: grid; grid-template-columns: 68px 1fr; background: #f6f7f8; font-size: 18px; line-height: 25px; }
.h-a { text-align: center; color: #222; font-family: "Liberation Sans", sans-serif; }
.h-b { background: #cfd3d6; border-bottom: 2px solid #23a08a; color: #23a08a; text-align: center; padding-left: 36px; font-family: "Liberation Sans", sans-serif; font-size: 17px; }
.sheet { height: 719px; flex: none; display: flex; flex-direction: column; }
.r { display: grid; grid-template-columns: 68px 1fr; flex: none; border-bottom: 1px solid #c8ccd0; font-size: 18px; }
.r55 { height: 55px; } .r63 { height: 63px; } .r56 { height: 56px; } .r54 { height: 54px; } .r43 { height: 43px; }
.bk { border-bottom-color: #222; }
.nb { border-bottom: 0; }
.rh { border-right: 1px solid #b6b9bf; text-align: center; color: #fff; line-height: 53px; font-family: "Liberation Sans", sans-serif; font-size: 19px; }
.rc { padding-left: 3px; line-height: 53px; color: #333; white-space: nowrap; }
.rc-up { line-height: 46px; letter-spacing: .3px; font-size: 18px; }
.r-h { border-bottom-color: #222; }
.r-h .rh { background: #6b3f82; border-right-color: #222; }
.r-h .rc { background: #43417a; color: #f0f0f0; font-size: 20px; }
.r-band { height: 63px; flex: none; background: #8ed8f8; border-bottom: 1px solid #222; text-align: center; font-size: 22px; word-spacing: 4px; line-height: 60px; color: #1c3344; padding-right: 4px; white-space: nowrap; }
.rc-sel { border: 3px solid #1d9d7a; margin: -1px -5px 0 0; height: 57px; }
.w-sheets { height: 26px; flex: none; background: #f3f4f6; display: flex; align-items: center; padding-left: 5px; }
.wn { width: 11px; height: 17px; margin-right: 20px; }
.wn:nth-child(3) { width: 13px; margin-right: 17px; }
.w-stab { width: 153px; height: 26px; background: #e8eaee; font-size: 15px; line-height: 26px; padding-left: 12px; color: #555; white-space: nowrap; }
.w-dots { margin-left: 17px; font: 700 14px/20px "Liberation Sans", sans-serif; letter-spacing: 1px; color: #444; width: 26px; }
.w-add { width: 16px; height: 16px; margin-left: 9px; }
.w-status { height: 35px; flex: none; background: #f4f5f7; display: flex; align-items: center; padding-left: 155px; }
.ws-eye { width: 21px; height: 19px; margin-top: -3px; }
.ws-z { width: 21px; height: 19px; margin-left: 8px; }
.w-status .wcaret { margin-left: 4px; }
.ws-v { width: 30px; height: 32px; flex: none; display: flex; align-items: center; justify-content: center; margin-right: 2px; }
.ws-on { background: #e4e6ea; width: 28px; margin-left: 28px; margin-right: 3px; }
.ws-v svg { width: 19px; height: 18px; }

/* taskbar */
.taskbar { height: 50px; background: #34361f; display: flex; position: relative; }
.tb-start { width: 69px; flex: none; position: relative; display: flex; padding-left: 10px; }
.tb-cloud { width: 40px; height: 38px; }
.tb-win { position: absolute; left: 21px; top: 15px; width: 20px; height: 20px; }
.tb-wm { position: absolute; left: 58px; top: -5px; font: 700 38px/50px "Liberation Sans", sans-serif; color: rgba(190,190,180,.3); z-index: 2; letter-spacing: 2px; }
.tb-app { flex: none; height: 50px; display: flex; align-items: flex-start; justify-content: center; padding-top: 9px; border-bottom: 3px solid #76b9ed; }
.tb-app svg { width: 30px; height: 31px; }
.cadt { font: 700 7px "Liberation Sans", sans-serif; fill: #f0d8e0; text-anchor: middle; }
.a1 { width: 51px; margin-right: 6px; }
.a2 { width: 61px; background: #5c5d4c; margin-right: 6px; }
.a3 { width: 51px; margin-right: 11px; }
.a4 { width: 51px; }
.tray { margin-left: auto; display: flex; align-items: center; height: 50px; color: #eee; }
.tray span { display: flex; justify-content: center; align-items: center; height: 50px; }
.t29 { width: 29px; } .t30 { width: 30px; } .t31 { width: 31px; } .t46 { width: 46px; }
.t30 svg { width: 22px; height: 18px; }
.t30:first-child svg { width: 18px; height: 11px; }
.t29 svg { width: 14px; height: 22px; }
.t31 svg { width: 20px; height: 22px; }
.t46 svg { width: 21px; height: 20px; }
.t-eng { width: 48px; font-size: 15px; line-height: 20px; font-family: "Liberation Sans", sans-serif; }
.t-sep { width: 1px; height: 50px; background: #6a6b58; margin: 0 5px 0 12px; }
```
